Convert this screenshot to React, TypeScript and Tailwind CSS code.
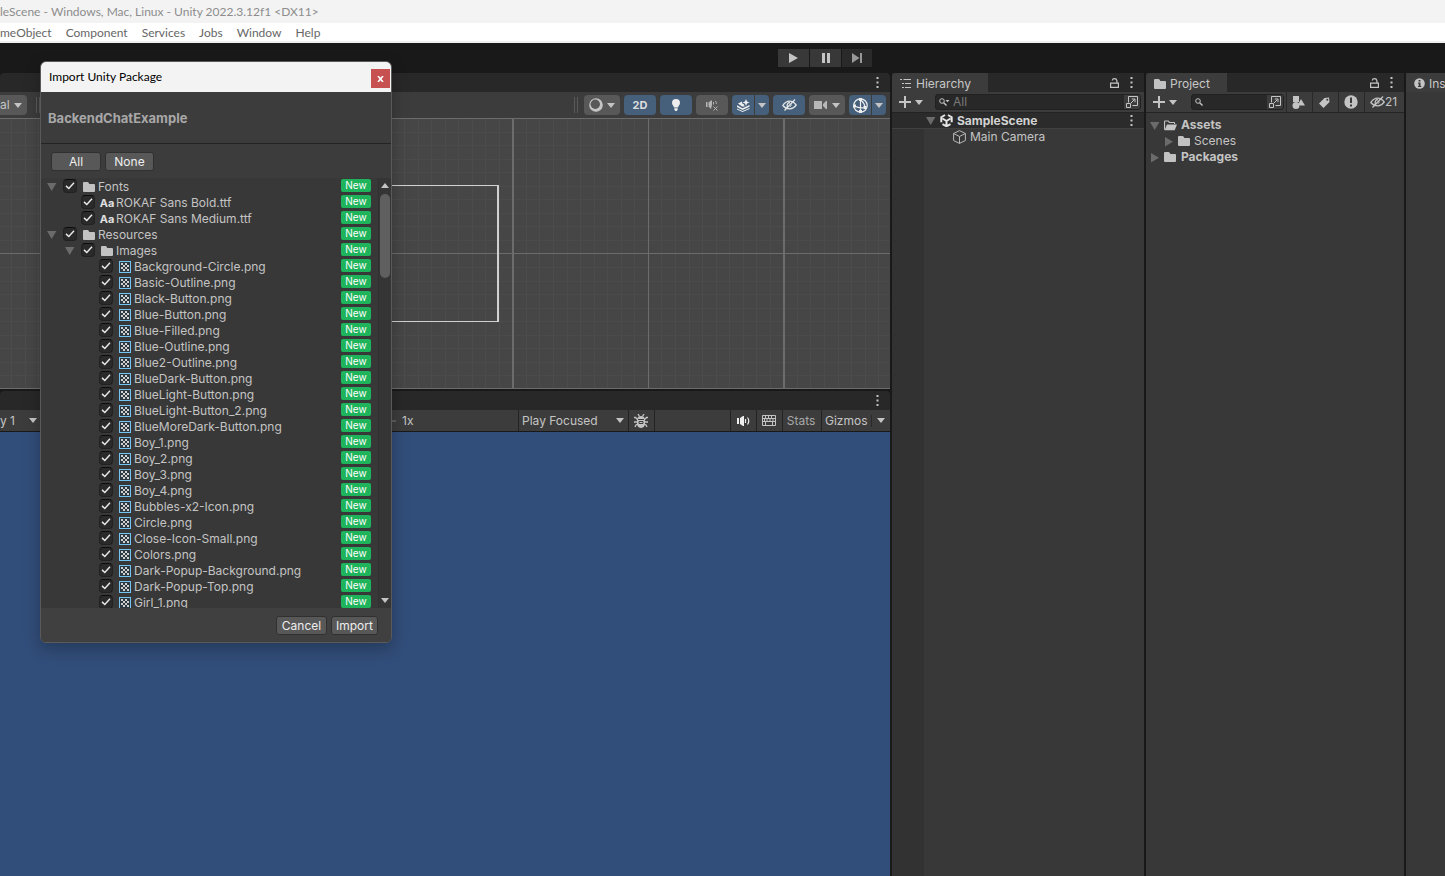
import type { ReactNode } from "react";

const FILES: { name: string; level: number; kind: "folder" | "font" | "texture" }[] = [
    { name: "Fonts", level: 0, kind: "folder" },
    { name: "ROKAF Sans Bold.ttf", level: 1, kind: "font" },
    { name: "ROKAF Sans Medium.ttf", level: 1, kind: "font" },
    { name: "Resources", level: 0, kind: "folder" },
    { name: "Images", level: 1, kind: "folder" },
    ...[
        "Background-Circle.png",
        "Basic-Outline.png",
        "Black-Button.png",
        "Blue-Button.png",
        "Blue-Filled.png",
        "Blue-Outline.png",
        "Blue2-Outline.png",
        "BlueDark-Button.png",
        "BlueLight-Button.png",
        "BlueLight-Button_2.png",
        "BlueMoreDark-Button.png",
        "Boy_1.png",
        "Boy_2.png",
        "Boy_3.png",
        "Boy_4.png",
        "Bubbles-x2-Icon.png",
        "Circle.png",
        "Close-Icon-Small.png",
        "Colors.png",
        "Dark-Popup-Background.png",
        "Dark-Popup-Top.png",
        "Girl_1.png",
    ].map((name) => ({ name, level: 2, kind: "texture" as const })),
];

const INDENT = ["pl-[5px]", "pl-[23px]", "pl-[41px]"];

/* ---------- icons ---------- */

function Caret({ className = "" }: { className?: string }) {
    return (
        <svg viewBox="0 0 8 5" className={`h-[5px] w-2 shrink-0 fill-[#c4c4c4] ${className}`}>
            <path d="M0 0h8L4 5z" />
        </svg>
    );
}

function Foldout({ open = true }: { open?: boolean }) {
    return (
        <svg viewBox="0 0 11 11" className="h-[11px] w-[11px] shrink-0 fill-[#6b6b6b]">
            <path d={open ? "M1 2h9.400L5.700 10z" : "M2 1v9.400L10 5.700z"} />
        </svg>
    );
}

function Kebab() {
    return (
        <svg viewBox="0 0 3 11" className="h-[11px] w-[3px] shrink-0 fill-[#c4c4c4]">
            <path d="M.5 0h2v2h-2zM.5 4.500h2v2h-2zM.5 9h2v2h-2z" />
        </svg>
    );
}

function Folder({ className = "" }: { className?: string }) {
    return (
        <svg viewBox="0 0 12 10" className={`h-[10px] w-3 shrink-0 fill-[#c2c2c2] ${className}`}>
            <path d="M0 1q0-1 1-1h3.500q.6 0 1 .6L6.300 2H11q1 0 1 1v6q0 1-1 1H1q-1 0-1-1z" />
        </svg>
    );
}

function FolderOpen() {
    return (
        <svg viewBox="0 0 14 11" className="h-[11px] w-[13px] shrink-0">
            <path d="M.6 10V1.200Q.6.600 1.200.6h3.300l1.300 1.600h5q.6 0 .6.600V4" fill="none" stroke="#c4c4c4" strokeWidth="1.200" />
            <path d="M3.200 4.300H14L11.500 10.600H.6z" fill="#c4c4c4" />
        </svg>
    );
}

function Texture() {
    return (
        <svg viewBox="0 0 12 12" className="h-3 w-3 shrink-0">
            <rect x=".5" y=".5" width="11" height="11" fill="#2e3a42" stroke="#74c4f2" />
            <path
                fill="#d0d0d0"
                d="M2 2h2v2H2zM6 2h2v2H6zM4 4h2v2H4zM8 4h2v2H8zM2 6h2v2H2zM6 6h2v2H6zM4 8h2v2H4zM8 8h2v2H8z"
            />
        </svg>
    );
}

function Lock() {
    return (
        <svg viewBox="0 0 9 10" className="h-[10px] w-[9px] shrink-0" fill="none" stroke="#c4c4c4" strokeWidth="1.200">
            <path d="M.6 5.100h7.800v4.300H.6zM2.300 2.500Q2.500.6 4.500.6T6.900 2.600V5" />
        </svg>
    );
}

function Plus() {
    return (
        <svg viewBox="0 0 12 12" className="h-3 w-3 shrink-0 fill-[#c4c4c4]">
            <path d="M5 0h2v5h5v2H7v5H5V7H0V5h5z" />
        </svg>
    );
}

function Magnifier({ menu = false }: { menu?: boolean }) {
    return (
        <svg viewBox="0 0 11 8" className="h-2 w-[11px] shrink-0" fill="none" stroke="#c4c4c4">
            <circle cx="3" cy="3" r="2.300" />
            <path d="M4.700 4.700 7.500 7.500" strokeWidth="1.400" />
            {menu && <path d="M6.500 2h4L8.500 4.300z" fill="#c4c4c4" stroke="none" />}
        </svg>
    );
}

function PopOut() {
    return (
        <svg viewBox="0 0 12 12" className="h-3 w-3" fill="none" stroke="#c4c4c4">
            <path d="M2.500 6.500v-6h9v9h-5M.5 7.500h4v4h-4zM5 7l3.500-3.500M5.800 3h3.200v3.200" />
        </svg>
    );
}

function HiddenEye({ color = "#c4c4c4" }: { color?: string }) {
    return (
        <svg viewBox="0 0 15 12" className="h-3 w-[15px] shrink-0" fill="none" stroke={color} strokeWidth="1.300">
            <path d="M.8 6.500Q3.800 2.200 7.500 2.200T14.200 6Q11.500 9.800 7.500 9.800T.8 6.500z" />
            <path d="M5.300 8Q4.500 4 8 3.500M13 .5 2.500 11.500" />
            <path d="M9.600 5Q10 7.500 7.200 8.200z" fill={color} stroke="none" />
        </svg>
    );
}

/* ---------- shared parts ---------- */

function Tab({ children, className = "" }: { children: ReactNode; className?: string }) {
    return (
        <button className={`flex h-[19px] items-center rounded-tl-sm bg-[#3c3c3c] pt-[2px] text-[#c8c8c8] ${className}`}>
            {children}
        </button>
    );
}

function SearchBox({ label, menu, className = "" }: { label: string; menu?: boolean; className?: string }) {
    return (
        <div className={`flex h-4 items-center overflow-hidden rounded-[3px] border border-[#212121] bg-[#282828] ${className}`}>
            <span className="pl-[3px]">
                <Magnifier menu={menu} />
            </span>
            <input
                aria-label={label}
                placeholder={menu ? "All" : ""}
                className="h-4 w-0 min-w-0 flex-1 bg-transparent px-[3px] text-xs outline-none placeholder:text-[#7a7a7a]"
            />
            <button aria-label="Open search window" className="flex h-4 w-4 items-center justify-center bg-[#3c3c3c]">
                <PopOut />
            </button>
        </div>
    );
}

function PushButton({ children, className = "" }: { children: ReactNode; className?: string }) {
    return (
        <button className={`h-[19px] rounded-[3px] border border-[#303030] bg-[#585858] text-center leading-[17px] text-[#eeeeee] ${className}`}>
            {children}
        </button>
    );
}

function ToolButton({ label, on, className, children }: { label: string; on?: boolean; className: string; children: ReactNode }) {
    return (
        <button
            aria-label={label}
            className={`flex h-5 shrink-0 items-center justify-center ${on ? "bg-[#46607c]" : "bg-[#585858]"} ${className}`}
        >
            {children}
        </button>
    );
}

/* ---------- top bars ---------- */

function TitleAndMenu() {
    return (
        <header className="shrink-0 font-[Lato,sans-serif] text-xs">
            <div className="h-[23px] overflow-hidden bg-[#f3f3f3] leading-6 whitespace-nowrap text-[#8d8d8d]">
                leScene - Windows, Mac, Linux - Unity 2022.3.12f1 &lt;DX11&gt;
            </div>
            <nav className="flex h-5 gap-[14px] border-b-2 border-[#f0f0f0] bg-white leading-[19px] text-[#666666]">
                {["meObject", "Component", "Services", "Jobs", "Window", "Help"].map((item) => (
                    <button key={item}>{item}</button>
                ))}
            </nav>
        </header>
    );
}

function PlayControls() {
    return (
        <div className="flex h-[30px] shrink-0 items-center justify-end gap-px bg-[#191919] pr-[573px]">
            <button aria-label="Play" className="flex h-[18px] w-[31px] items-center justify-center bg-[#383838]">
                <svg viewBox="0 0 9 10" className="h-[10px] w-[9px] fill-[#c4c4c4]">
                    <path d="M0 0 9 5 0 10z" />
                </svg>
            </button>
            <button aria-label="Pause" className="flex h-[18px] w-[31px] items-center justify-center bg-[#383838]">
                <svg viewBox="0 0 8 10" className="h-[10px] w-2 fill-[#c4c4c4]">
                    <path d="M0 0h3v10H0zM5 0h3v10H5z" />
                </svg>
            </button>
            <button aria-label="Step" className="flex h-[18px] w-[30px] items-center justify-center bg-[#2a2a2a]">
                <svg viewBox="0 0 10 10" className="h-[10px] w-[10px] fill-[#989898]">
                    <path d="M0 0 7.500 5 0 10zM8 0h2v10H8z" />
                </svg>
            </button>
        </div>
    );
}

/* ---------- scene view ---------- */

function SceneToolbar() {
    return (
        <div className="flex h-[26px] items-center gap-1 overflow-hidden bg-[#3c3c3c] pr-1">
            <button className="flex h-5 w-[27px] shrink-0 items-center gap-1 rounded-r-sm bg-[#585858] text-[#c4c4c4]">
                al
                <Caret />
            </button>
            <span className="ml-[5px] h-4 w-1 border-x border-[#5a5a5a]" />
            <span className="flex-1" />
            <span className="mr-[2px] h-4 w-1 border-x border-[#5a5a5a]" />
            <ToolButton label="Draw mode" className="w-9 gap-1 rounded-sm">
                <svg viewBox="0 0 14 14" className="h-[14px] w-[14px]">
                    <circle cx="7" cy="7" r="6.200" fill="#c4c4c4" stroke="#c4c4c4" strokeWidth="1.200" />
                    <circle cx="6.300" cy="6.200" r="4.700" fill="#585858" />
                </svg>
                <Caret />
            </ToolButton>
            <ToolButton label="2D" on className="w-8 rounded-sm text-[11px] font-bold text-[#dddddd]">
                2D
            </ToolButton>
            <ToolButton label="Scene lighting" on className="w-8 rounded-sm">
                <svg viewBox="0 0 8 12" className="h-3 w-2 fill-[#eeeeee]">
                    <path d="M4 0a4 4 0 0 1 4 4Q8 5.500 6.600 7L6 8.500H2L1.400 7Q0 5.500 0 4a4 4 0 0 1 4-4zM2.300 9.300h3.400v1.200L4.800 12H3.200l-.9-1.500z" />
                </svg>
            </ToolButton>
            <ToolButton label="Scene audio" className="w-8 rounded-sm">
                <svg viewBox="0 0 12 12" className="h-3 w-3" fill="none" stroke="#b4b4b4">
                    <path d="M0 3h1.500v5H0zM2.500 3.500 5 1.500h1V6L5 10 2.500 7.500z" fill="#b4b4b4" stroke="none" />
                    <path d="M7.500 3v2.500M9.500 2q1 1.500.8 3M7.500 7.500l4 4M11.500 7.500l-4 4" />
                </svg>
            </ToolButton>
            <div className="flex gap-px">
                <ToolButton label="Effects" on className="w-[22px] rounded-l-sm">
                    <svg viewBox="0 0 13 13" className="h-[13px] w-[13px] fill-[#eeeeee]">
                        <path d="M9 0l1 2.500 2.500 1L10 4.500 9 7 8 4.500l-2.500-1L8 2.500zM1 4.500 5 2.500v1.800l1.800.9.9 2.300H5zM0 6.300l5.500 3L12.500 6v1.700L5.500 11 0 8z" />
                        <path d="M0 9.500l5.500 2.600 7-3.200v1L5.500 13 0 10.500z" />
                    </svg>
                </ToolButton>
                <ToolButton label="Effects menu" on className="w-[14px] rounded-r-sm">
                    <Caret />
                </ToolButton>
            </div>
            <ToolButton label="Scene visibility" on className="w-8 rounded-sm">
                <HiddenEye color="#e4e4e4" />
            </ToolButton>
            <ToolButton label="Scene camera" className="w-9 gap-[5px] rounded-sm">
                <svg viewBox="0 0 13 8" className="h-2 w-[13px] fill-[#b8b8b8]">
                    <path d="M0 0h8v8H0zM9 3l3-3h1v8h-1L9 5z" />
                </svg>
                <Caret />
            </ToolButton>
            <div className="flex gap-px">
                <ToolButton label="Gizmos" on className="w-[22px] rounded-l-sm">
                    <svg viewBox="0 0 15 15" className="h-[15px] w-[15px]" fill="none" stroke="#eeeeee" strokeWidth="1.200">
                        <circle cx="7.500" cy="7.500" r="6.700" />
                        <path d="M7.500 2v11M8 2q3.500 3 4 7.500M1.500 8Q6 10.500 12.500 9.500" />
                        <path d="M6 0h3v3H6zM0 6.500h3v3H0zM10.500 8h3v3h-3zM6 12h3v3H6z" fill="#eeeeee" stroke="none" />
                    </svg>
                </ToolButton>
                <ToolButton label="Gizmos menu" on className="w-[14px] rounded-r-sm">
                    <Caret />
                </ToolButton>
            </div>
        </div>
    );
}

function SceneCanvas() {
    const minor = Array.from({ length: 66 }, (_, i) => 11 + i * 13.55);
    const minorRows = Array.from({ length: 19 }, (_, i) => 13.5 + i * 13.55);
    return (
        <svg className="block h-[271px] w-full bg-[#464646]" shapeRendering="crispEdges">
            {minor.map((x) => (
                <rect key={x} x={Math.round(x)} width="1" height="271" fill="#4c4c4c" />
            ))}
            {minorRows.map((y) => (
                <rect key={y} y={Math.round(y)} width="100%" height="1" fill="#4b4b4b" />
            ))}
            <g fill="#6c6c6c">
                <rect y="0" width="100%" height="1" />
                <rect y="135" width="100%" height="1" />
                <rect y="270" width="100%" height="1" />
                <rect x="512" width="2" height="271" />
                <rect x="648" width="1" height="271" />
                <rect x="783" width="2" height="271" />
            </g>
            {/* camera bounds */}
            <path d="M256 67h242M256 203h242" stroke="#d0d0d0" transform="translate(0 .5)" />
            <rect x="497" y="67" width="2" height="137" fill="#d0d0d0" />
        </svg>
    );
}

/* ---------- game view ---------- */

function GameToolbar() {
    return (
        <div className="flex h-[21px] items-center overflow-hidden bg-[#3c3c3c] text-[#c4c4c4]">
            <button className="flex h-full w-10 shrink-0 items-center justify-between pr-[3px]">
                y 1
                <Caret />
            </button>
            <span className="flex-1" />
            <label className="flex w-[222px] items-center gap-[6px]">
                <input
                    type="range"
                    aria-label="Scale"
                    defaultValue={0}
                    className="h-0.5 w-[100px] appearance-none bg-[#5e5e5e] [&::-webkit-slider-thumb]:h-2.5 [&::-webkit-slider-thumb]:w-2.5 [&::-webkit-slider-thumb]:appearance-none [&::-webkit-slider-thumb]:rounded-full [&::-webkit-slider-thumb]:bg-[#999999]"
                />
                1x
            </label>
            <div className="flex h-full w-[110px] items-center border-l border-[#232323] pr-1">
                <select aria-label="Play mode" className="h-full min-w-0 flex-1 appearance-none bg-transparent pl-[3px] outline-none">
                    <option>Play Focused</option>
                </select>
                <Caret />
            </div>
            <button aria-label="Debug" className="flex h-full w-[26px] items-center justify-center border-l border-[#232323] pr-[2px]">
                <svg viewBox="0 0 14 14" className="h-[14px] w-[14px]" fill="none" stroke="#c4c4c4">
                    <path d="M3.500 5.500q0-3 3.500-3t3.500 3V10q0 3.500-3.500 3.500T3.500 10z" fill="#c4c4c4" />
                    <path d="M4 0l1.500 2.500M10 0 8.500 2.500M0 3.500h1.500L4 6M14 3.500h-1.500L10 6M0 8h14M1 13l1-2 2-1M13 13l-1-2-2-1" strokeWidth="1.300" />
                    <path d="M4 5.500h6" stroke="#3c3c3c" />
                    <path d="M5 7.500h4v2H5z" fill="#c4c4c4" stroke="#3c3c3c" />
                </svg>
            </button>
            <span className="h-full w-[76px] border-l border-[#232323]" />
            <button aria-label="Mute audio" className="flex h-full w-[26px] items-center justify-center border-l border-[#232323]">
                <svg viewBox="0 0 13 10" className="h-[10px] w-[13px]" fill="none" stroke="#eeeeee">
                    <path d="M0 2h2v6H0zM3 2l3-2h1v10H6L3 8z" fill="#eeeeee" stroke="none" />
                    <path d="M8.500 3v4M10.500 1.500Q13 5 10.500 8.500" strokeWidth="1.200" />
                </svg>
            </button>
            <button aria-label="Shortcuts" className="flex h-full w-[26px] items-center justify-center border-l border-[#232323] pr-[2px]">
                <svg viewBox="0 0 14 11" className="h-[11px] w-[14px]" fill="none" stroke="#c4c4c4">
                    <path d="M.5.5h13v10H.5zM0 3.500h14M0 6.500h14M3.500 0v3.500M6.500 0v3.500M9.500 0v3.500M5 3.500v3M8 3.500v3M11 3.500v3M3.500 6.500v4M10.500 6.500v4M2.500 3.500v3" />
                </svg>
            </button>
            <button className="h-full w-[39px] border-l border-[#232323] pr-[2px] text-center text-[#a8a8a8]">Stats</button>
            <div className="flex h-full w-[69px] items-center border-l border-[#232323]">
                <button className="flex-1 pl-[3px] text-left">Gizmos</button>
                <span className="h-3 w-px bg-[#2a2a2a]" />
                <button aria-label="Gizmos menu" className="px-[5px]">
                    <Caret />
                </button>
            </div>
        </div>
    );
}

function LeftColumn() {
    return (
        <div className="flex min-w-0 flex-1 flex-col">
            <div className="flex h-[19px] items-center justify-end rounded-t-sm bg-[#282828] pr-[11px]">
                <Kebab />
            </div>
            <SceneToolbar />
            <SceneCanvas />
            <div className="mt-0.5 flex h-[19px] items-center justify-end rounded-t-sm bg-[#282828] pr-[11px]">
                <Kebab />
            </div>
            <GameToolbar />
            <div className="mt-px flex-1 bg-[#314d79]" />
        </div>
    );
}

/* ---------- right panels ---------- */

function Hierarchy() {
    return (
        <section className="flex w-[252px] shrink-0 flex-col bg-[#383838]">
            <div className="flex h-[19px] items-center bg-[#282828] pr-[11px]">
                <Tab className="w-24 gap-[5px] pl-2">
                    <svg viewBox="0 0 11 9" className="h-[9px] w-[11px]" fill="none" stroke="#c4c4c4">
                        <path d="M0 .5h2M3.500.5H11M2 4.500h2M5 4.500h6M2 8.500h2M5 8.500h6" />
                    </svg>
                    Hierarchy
                </Tab>
                <span className="flex-1" />
                <Lock />
                <span className="w-[11px]" />
                <Kebab />
            </div>
            <div className="flex h-5 items-center gap-1 bg-[#3c3c3c] pr-[3px] pl-[7px]">
                <Plus />
                <Caret />
                <SearchBox label="Search hierarchy" menu className="ml-2 flex-1" />
            </div>
            <div className="flex h-[17px] items-center border-y border-t-[#232323] border-b-[#404040] bg-[#2b2b2b] pr-[11px] pl-[33px]">
                <Foldout />
                <svg viewBox="0 0 13 13" className="mr-1 ml-1 h-[13px] w-[13px]" fill="none" stroke="#e6e6e6" strokeWidth="2">
                    <path d="M5 1 1.300 3.200v5M8 1l3.700 2.200v5M2.500 10.200 6.500 12.300l4-2.100M6.500 12V7M6.500 7 2.500 4.500M6.500 7l4-2.500" />
                </svg>
                <span className="flex-1 font-bold text-[#d2d2d2]">SampleScene</span>
                <Kebab />
            </div>
            <div className="flex flex-1">
                <div className="w-8 bg-[#323232]" />
                <div className="flex h-4 items-center gap-1 pl-[29px] text-[#c4c4c4]">
                    <svg viewBox="0 0 13 14" className="h-[14px] w-[13px]" fill="none" stroke="#b8b8b8" strokeLinejoin="round">
                        <path d="M6.500.6 12.400 3.500v7L6.500 13.400.6 10.500v-7zM.6 3.500l5.900 3 5.900-3M6.500 6.500v6.900" />
                    </svg>
                    Main Camera
                </div>
            </div>
        </section>
    );
}

function Project() {
    const cell = "flex h-full w-[26px] shrink-0 items-center justify-center border-l border-[#282828] pr-[2px]";
    return (
        <section className="w-[258px] shrink-0 bg-[#383838]">
            <div className="flex h-[19px] items-center bg-[#282828] pr-[11px]">
                <Tab className="w-[81px] gap-1 pl-2">
                    <Folder />
                    Project
                </Tab>
                <span className="flex-1" />
                <Lock />
                <span className="w-[11px]" />
                <Kebab />
            </div>
            <div className="flex h-[21px] items-center border-b border-[#232323] bg-[#3c3c3c] pl-[7px]">
                <Plus />
                <Caret className="ml-1" />
                <SearchBox label="Search project" className="mr-[2px] ml-[14px] flex-1" />
                <button aria-label="Search by type" className={cell}>
                    <svg viewBox="0 0 13 13" className="h-[13px] w-[13px] fill-[#c4c4c4]">
                        <path d="M1 0h6v6H1zM9 3l4 6.500H7.500L6.500 7.500z" />
                        <circle cx="4" cy="9.500" r="3.500" />
                    </svg>
                </button>
                <button aria-label="Search by label" className={cell}>
                    <svg viewBox="0 0 11 11" className="h-[11px] w-[11px] fill-[#c4c4c4]">
                        <path fillRule="evenodd" d="M5.500 1 10 .5 10.500 5 4.500 11 0 6.500zM8.300 1.800a1 1 0 1 0 0 2 1 1 0 0 0 0-2z" />
                    </svg>
                </button>
                <button aria-label="Search by log type" className={cell}>
                    <svg viewBox="0 0 14 14" className="h-[14px] w-[14px]">
                        <circle cx="7" cy="7" r="6.700" fill="#c4c4c4" />
                        <path d="M6 2.500h2V8H6zM6 9.500h2v2H6z" fill="#3c3c3c" />
                    </svg>
                </button>
                <button
                    aria-label="Hidden packages"
                    className="flex h-full w-[40px] shrink-0 items-center justify-center border-l border-[#282828] pr-[2px] text-[#c4c4c4]"
                >
                    <HiddenEye />
                    21
                </button>
            </div>
            <ul className="pt-1 text-[#c4c4c4]">
                <li className="flex h-4 items-center gap-1 pl-[3px] font-bold">
                    <Foldout />
                    <FolderOpen />
                    Assets
                </li>
                <li className="flex h-4 items-center gap-1 pl-[17px]">
                    <Foldout open={false} />
                    <Folder />
                    Scenes
                </li>
                <li className="flex h-4 items-center gap-1 pl-[3px] font-bold">
                    <Foldout open={false} />
                    <Folder className="mr-px" />
                    Packages
                </li>
            </ul>
        </section>
    );
}

function Inspector() {
    return (
        <section className="w-[39px] shrink-0 overflow-hidden bg-[#383838]">
            <Tab className="w-full gap-1 pl-2">
                <svg viewBox="0 0 11 11" className="h-[11px] w-[11px] shrink-0">
                    <circle cx="5.500" cy="5.500" r="5.300" fill="#c4c4c4" />
                    <path d="M4.600 2h1.900v1.600H4.600zM4 4.500h2.500V8h.8v1H4V8h.7V5.500H4z" fill="#383838" />
                </svg>
                Ins
            </Tab>
        </section>
    );
}

/* ---------- import dialog ---------- */

function FileRow({ name, level, kind }: (typeof FILES)[number]) {
    return (
        <li className={`flex h-4 shrink-0 items-center gap-[6px] ${INDENT[level]}`}>
            {kind === "folder" ? <Foldout /> : <span className="w-[11px]" />}
            <label className="flex flex-1 items-center gap-[6px]">
                <span className="relative flex">
                    <input
                        type="checkbox"
                        defaultChecked
                        className="peer h-[14px] w-[14px] appearance-none rounded-sm border border-[#212121] border-t-[#0d0d0d] bg-[#2a2a2a]"
                    />
                    <svg
                        viewBox="0 0 14 14"
                        className="pointer-events-none absolute inset-0 hidden h-[14px] w-[14px] peer-checked:block"
                        fill="none"
                        stroke="#e8e8e8"
                        strokeWidth="1.500"
                    >
                        <path d="M3 6.900 5.800 9.500 11 3.800" />
                    </svg>
                </span>
                <span className="flex h-4 items-center gap-[3px] pt-[2px]">
                    {kind === "folder" && <Folder />}
                    {kind === "texture" && <Texture />}
                    {kind === "font" && (
                        <span className="flex w-3 justify-center text-[11px] font-bold text-[#e0e0e0]">Aa</span>
                    )}
                    {name}
                </span>
            </label>
            <span className="mb-px h-[13px] w-[30px] rounded-xs bg-[#1fb45c] text-center text-[10px] leading-[13px] text-white">
                New
            </span>
        </li>
    );
}

function ImportDialog() {
    return (
        <div
            role="dialog"
            aria-label="Import Unity Package"
            className="absolute top-[61px] left-10 flex w-[352px] flex-col overflow-hidden rounded-md border border-[#5a5a5a] bg-[#3c3c3c] shadow-[0_6px_16px_rgba(0,0,0,0.25)]"
        >
            <div className="flex h-[30px] items-center justify-between bg-[#f3f3f3] pl-2 font-[Lato,sans-serif] text-black">
                Import Unity Package
                <button aria-label="Close" className="mt-[3px] mr-px flex h-[19px] w-[19px] items-center justify-center bg-[#c75050]">
                    <svg viewBox="0 0 7 6" className="h-[6px] w-[7px]" fill="none" stroke="white" strokeWidth="1.600">
                        <path d="M1 0l5 6M6 0 1 6" />
                    </svg>
                </button>
            </div>
            <h1 className="h-[52px] border-b border-[#232323] pl-[7px] text-[13px] leading-[52px] font-bold text-[#a8a8a8]">
                BackendChatExample
            </h1>
            <div className="flex h-[34px] gap-1 pt-2 pl-[10px]">
                <PushButton className="w-[50px]">All</PushButton>
                <PushButton className="w-[49px]">None</PushButton>
            </div>
            <div className="flex h-[430px] bg-[#383838] text-[#c4c4c4]">
                <ul className="flex flex-1 flex-col overflow-hidden">
                    {FILES.map((file) => (
                        <FileRow key={file.name} {...file} />
                    ))}
                </ul>
                <div className="ml-[7px] flex w-[13px] flex-col items-center border-l border-[#303030] bg-[#353535] py-[5px]">
                    <Caret className="rotate-180" />
                    <span className="mt-[6px] h-[84px] w-[10px] rounded-full bg-[#5f5f5f]" />
                    <Caret className="mt-auto" />
                </div>
            </div>
            <div className="flex h-[34px] items-start justify-end gap-1 bg-[#404040] pt-2 pr-[13px]">
                <PushButton className="w-[51px]">Cancel</PushButton>
                <PushButton className="w-[47px]">Import</PushButton>
            </div>
        </div>
    );
}

export default function App() {
    return (
        <div className="relative flex h-screen flex-col overflow-hidden bg-[#191919] font-[Inter,sans-serif] text-xs">
            <TitleAndMenu />
            <PlayControls />
            <main className="flex min-h-0 flex-1 gap-0.5">
                <LeftColumn />
                <Hierarchy />
                <Project />
                <Inspector />
            </main>
            <ImportDialog />
        </div>
    );
}
